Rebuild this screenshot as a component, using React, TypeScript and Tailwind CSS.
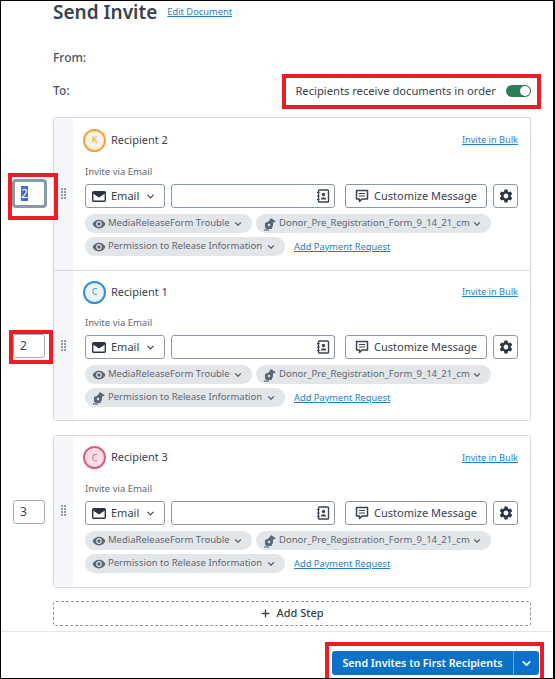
import * as React from "react";
import { ChevronDown, Plus } from "lucide-react";
import { MdVisibility, MdSettings } from "react-icons/md";

function MailIcon() {
  return (
    <svg viewBox="0 0 14 11" className="h-[11px] w-[14px] shrink-0 text-[#2c3440]">
      <rect x="0.700" y="0.700" width="12.600" height="9.600" rx="1" fill="none" stroke="currentColor" strokeWidth="1.400" />
      <path d="M1 1h12v1.500L7 6.500 1 2.500z" fill="currentColor" />
    </svg>
  );
}

function PenIcon() {
  return (
    <svg viewBox="0 0 14 14" className="h-[14px] w-[14px] shrink-0 text-[#5b6775]">
      <path d="M8 1l5 3.500-3 1V8.500l-1.500 3.500H3.500l-1.500-1.500 0-4.500 3.500-1.500z" fill="currentColor" />
      <circle cx="6" cy="8" r="1.200" fill="#e3e6e9" />
      <path d="M1 13h5" stroke="currentColor" strokeWidth="1.200" />
    </svg>
  );
}

function ContactIcon() {
  return (
    <svg viewBox="0 0 14 14" className="h-[14px] w-[14px] text-[#3a4553]">
      <rect x="2.500" y="1" width="10" height="12" rx="0.800" fill="none" stroke="currentColor" strokeWidth="1.400" />
      <circle cx="7.500" cy="5.500" r="1.700" fill="currentColor" />
      <path d="M4.800 10.500c0-3 5.400-3 5.400 0z" fill="currentColor" />
      <path d="M1 3.500h2.500M1 7h2.500M1 10.500h2.500" stroke="currentColor" strokeWidth="1.200" />
    </svg>
  );
}

function MessageIcon() {
  return (
    <svg viewBox="0 0 14 14" className="h-[14px] w-[14px] shrink-0 text-[#3a4553]">
      <path d="M1.500 1.500h11v8.500H7L4.500 12.500V10h-3z" fill="none" stroke="currentColor" strokeWidth="1.500" strokeLinejoin="round" />
      <path d="M4 4.500h6M4 7h6" stroke="currentColor" strokeWidth="1.200" />
    </svg>
  );
}

function Grip() {
  return (
    <div className="grid grid-cols-2 gap-x-[1px] gap-y-[1px]">
      {[0, 1, 2, 3, 4, 5, 6, 7].map((i) => (
        <span key={i} className="h-[2px] w-[2px] bg-[#8d98a5]" />
      ))}
    </div>
  );
}

function Chip({ label, pen, className }: { label: string; pen?: boolean; className: string }) {
  return (
    <div className={`flex h-[19px] items-center rounded-full bg-[#e3e6e9] pl-[7px] text-[9.5px] text-[#5b6775] ${className}`}>
      {pen ? <PenIcon /> : <MdVisibility className="h-[14px] w-[14px] shrink-0 text-[#5b6775]" />}
      <span className="ml-[2px] whitespace-nowrap">{label}</span>
      <ChevronDown className="ml-auto mr-[9px] h-[10px] w-[10px] shrink-0" strokeWidth={3} />
    </div>
  );
}

function RecipientRow({
  name, initial, ring, fill, text, secondPen, rowClass, topGap, headerClass, stepBox,
}: {
  name: string; initial: string; ring: string; fill: string; text: string;
  secondPen?: boolean; rowClass: string; topGap: string; headerClass: string; stepBox: React.ReactNode;
}) {
  return (
    <div className="flex">
      <div className="flex w-[52px] shrink-0 items-center">{stepBox}</div>
      <div className={`flex flex-1 border-[#d5dade] ${rowClass}`}>
        <div className="flex w-[19px] shrink-0 items-start justify-center bg-[#f4f6f9]">
          <div className={topGap}><Grip /></div>
        </div>
        <div className="flex-1 pl-[12px] pr-[12px]">
          <div className={`flex items-center pb-[2px] ${headerClass}`}>
            <span className={`-ml-[2px] flex h-[23px] w-[23px] items-center justify-center rounded-full border-2 text-[9px] ${ring} ${fill} ${text}`}>{initial}</span>
            <span className="ml-[5px] text-[11px] text-[#38424e]">{name}</span>
            <a className="ml-auto text-[9.2px] text-[#1f7fc9] underline">Invite in Bulk</a>
          </div>
          <div className="text-[9.5px] leading-[16px] text-[#5b6775]">Invite via Email</div>
          <div className="mt-[4px] flex h-[24px] text-[#38424e]">
            <div className="flex w-[80px] items-center rounded-[3px] border border-[#8d98a5] pl-[6px] text-[11px]">
              <MailIcon />
              <span className="ml-[5px]">Email</span>
              <ChevronDown className="ml-auto mr-[8px] h-[11px] w-[11px]" strokeWidth={2.5} />
            </div>
            <div className="ml-[6px] flex w-[164px] items-center justify-end rounded-[3px] border border-[#8d98a5] pr-[4px]">
              <ContactIcon />
            </div>
            <div className="ml-[10px] flex w-[142px] items-center rounded-[3px] border border-[#8d98a5] pl-[9px] text-[11px]">
              <MessageIcon />
              <span className="ml-[5px] whitespace-nowrap">Customize Message</span>
            </div>
            <div className="ml-[6px] flex w-[25px] items-center justify-center rounded-[3px] border border-[#8d98a5]">
              <MdSettings className="h-[16px] w-[16px] text-[#2c3440]" />
            </div>
          </div>
          <div className="mt-[6px] flex gap-[4px]">
            <Chip label="MediaReleaseForm Trouble" className="w-[167px]" />
            <Chip label="Donor_Pre_Registration_Form_9_14_21_cm" pen className="w-[235px]" />
          </div>
          <div className="mt-[4px] flex items-center">
            <Chip label="Permission to Release Information" pen={secondPen} className="w-[200px]" />
            <a className="ml-[9px] text-[9.3px] text-[#1f7fc9] underline">Add Payment Request</a>
          </div>
        </div>
      </div>
    </div>
  );
}

function StepInput({ value, selected }: { value: string; selected?: boolean }) {
  if (selected) {
    return (
      <div className="relative ml-[11px] flex h-[29px] w-[35px] items-center rounded-[4px] border-[3px] border-[#8d98a5] bg-white pl-[6px] text-[12px] text-[#38424e]">
        <span className="bg-[#3a6fd8] leading-[15px] text-white">{value}</span>
        <span className="absolute -left-[7px] -top-[9px] h-[47px] w-[50px] border-[4px] border-[#ed1c24]" />
      </div>
    );
  }
  return (
    <div className="relative ml-[12px] flex h-[24px] w-[32px] items-center rounded-[3px] border border-[#a3adb8] bg-white pl-[6px] text-[12px] text-[#38424e]">
      {value}
      {value === "2" && <span className="absolute -left-[5px] -top-[5px] h-[34px] w-[44px] border-[4px] border-[#ed1c24]" />}
    </div>
  );
}

export default function App() {
  return (
    <div
      className="flex h-[679px] w-[555px] flex-col overflow-hidden border-b border-l border-r-2 border-t border-black bg-white"
      style={{ fontFamily: '"Noto Sans", "Open Sans", sans-serif' }}
    >
      <div className="flex-1 pr-[22px]">
        <div className="flex h-[22px] items-center pl-[52px]">
          <h1 className="text-[19px] font-semibold leading-[22px] text-[#38424e]">Send Invite</h1>
          <a className="ml-[10px] text-[9.3px] text-[#1f7fc9] underline">Edit Document</a>
        </div>
        <div className="mt-[25px] pl-[52px] text-[12px] font-medium leading-[20px] text-[#4a5562]">From:</div>
        <div className="mt-[13px] flex h-[20px] items-center pl-[52px] text-[12px] font-medium text-[#4a5562]">
          <span>To:</span>
          <div className="relative ml-auto flex items-center">
            <span className="text-[11.2px] font-normal text-[#38424e]">Recipients receive documents in order</span>
            <span className="ml-[10px] flex h-[12px] w-[25px] items-center justify-end rounded-full bg-[#2b7d52] pr-[1px]">
              <span className="h-[10px] w-[10px] rounded-full bg-white" />
            </span>
            <span className="absolute -bottom-[10px] -left-[13px] -right-[10px] -top-[9px] border-[4px] border-[#ed1c24]" />
          </div>
        </div>

        <div className="mt-[16px]">
          <RecipientRow
            name="Recipient 2" initial="K" ring="border-[#f2a23c]" fill="bg-[#fdf3e3]" text="text-[#f2a23c]"
            rowClass="h-[153px] rounded-t-[3px] border-l border-r border-t" topGap="mt-[70px]" headerClass="h-[46px]"
            stepBox={<StepInput value="2" selected />}
          />
          <RecipientRow
            name="Recipient 1" initial="C" ring="border-[#2f8fdc]" fill="bg-[#eaf4fc]" text="text-[#2f8fdc]" secondPen
            rowClass="h-[151px] rounded-b-[3px] border-b border-l border-r border-t" topGap="mt-[69px]" headerClass="h-[44px]"
            stepBox={<StepInput value="2" />}
          />
          <div className="mt-[14px]">
            <RecipientRow
              name="Recipient 3" initial="C" ring="border-[#d9617f]" fill="bg-[#fadde4]" text="text-[#d9617f]"
              rowClass="h-[153px] rounded-[3px] border" topGap="mt-[69px]" headerClass="h-[45px]"
              stepBox={<StepInput value="3" />}
            />
          </div>
        </div>

        <div className="ml-[52px] mt-[13px] flex h-[25px] items-center justify-center rounded-[3px] border border-dashed border-[#8d98a5] text-[11px] font-medium text-[#38424e]">
          <Plus className="h-[11px] w-[11px]" strokeWidth={3} />
          <span className="ml-[5px]">Add Step</span>
        </div>
      </div>

      <div className="flex h-[47px] shrink-0 items-start justify-end border-t border-[#e3e6e9] pr-[14px] pt-[19px]">
        <div className="relative flex h-[24px] w-[207px] items-center rounded-[3px] bg-[#0a72c9] text-white">
          <span className="flex-1 text-center text-[10.700px] font-semibold whitespace-nowrap">Send Invites to First Recipients</span>
          <span className="flex h-full w-[26px] items-center justify-center border-l border-[#6aa9dd]">
            <ChevronDown className="h-[13px] w-[13px]" strokeWidth={3} />
          </span>
          <span className="absolute -left-[7px] -right-[5px] -top-[9px] h-[40px] border-[4px] border-[#ed1c24]" />
        </div>
      </div>
    </div>
  );
}
